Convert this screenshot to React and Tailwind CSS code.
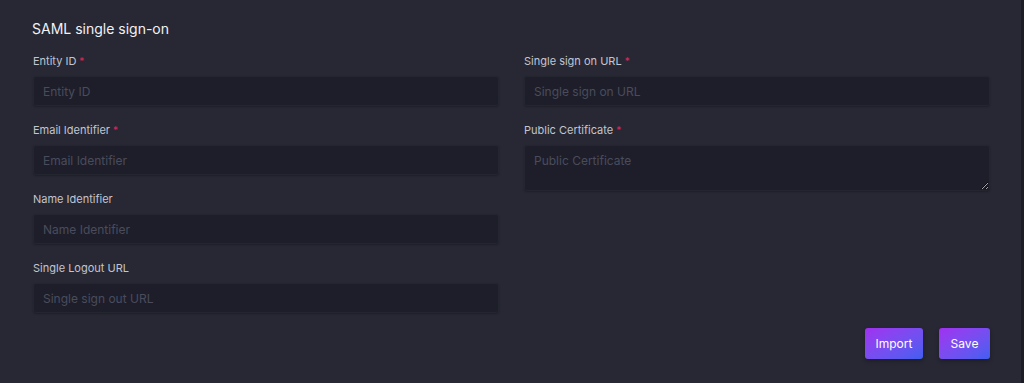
import { useState } from 'react';

const inputClass =
  'w-full h-[30px] px-[9px] bg-[#1d1e2a] border border-[#23252f] rounded-[3px] text-[12px] text-gray-200 placeholder:text-[#4a4c5c] outline-none shadow-[0_1px_2px_rgba(0,0,0,0.25)]';

function Field({ label, required, children }) {
  return (
    <div className="flex flex-col">
      <label className="h-4 mb-[7px] text-[11px] leading-4 text-[#c3c5cf] flex items-center gap-[3px]">
        {label}
        {required && <span className="text-[#e0245e] text-[10px]">*</span>}
      </label>
      {children}
    </div>
  );
}

export default function App() {
  const [form, setForm] = useState({
    entityId: '',
    email: '',
    name: '',
    logout: '',
    sso: '',
    cert: ''
  });

  const update = (key) => (e) => setForm({ ...form, [key]: e.target.value });

  return (
    <div className="w-full h-[383px] flex bg-[#272834] font-['Inter','Liberation_Sans',sans-serif]">
      <div className="flex-1 pt-[19px] pl-[32px] pr-[31px]">
        <h2 className="text-[14px] leading-5 font-normal text-[#f1f1f4] mb-[14px]">SAML single sign-on</h2>

        <div className="grid grid-cols-2 gap-x-[25px] pl-px">
          {/* Left column */}
          <div className="flex flex-col gap-[16px]">
            <Field label="Entity ID" required>
              <input className={inputClass} placeholder="Entity ID" value={form.entityId} onChange={update('entityId')} />
            </Field>
            <Field label="Email Identifier" required>
              <input className={inputClass} placeholder="Email Identifier" value={form.email} onChange={update('email')} />
            </Field>
            <Field label="Name Identifier">
              <input className={inputClass} placeholder="Name Identifier" value={form.name} onChange={update('name')} />
            </Field>
            <Field label="Single Logout URL">
              <input className={inputClass} placeholder="Single sign out URL" value={form.logout} onChange={update('logout')} />
            </Field>
          </div>

          {/* Right column */}
          <div className="flex flex-col gap-[16px]">
            <Field label="Single sign on URL" required>
              <input className={inputClass} placeholder="Single sign on URL" value={form.sso} onChange={update('sso')} />
            </Field>
            <Field label="Public Certificate" required>
              <textarea
                className="w-full h-[46px] px-[9px] pt-[6px] bg-[#1d1e2a] border border-[#23252f] rounded-[3px] text-[12px] text-gray-200 placeholder:text-[#4a4c5c] outline-none shadow-[0_1px_2px_rgba(0,0,0,0.25)] resize-y"
                placeholder="Public Certificate"
                value={form.cert}
                onChange={update('cert')}
              />
            </Field>
          </div>
        </div>

        <div className="flex justify-end gap-[16px] mt-[15px]">
          <button className="w-[58px] h-[31px] rounded-[3px] bg-gradient-to-br from-[#a02ff0] to-[#3f5ef0] text-[12px] text-white shadow-[0_2px_4px_rgba(0,0,0,0.3)]">
            Import
          </button>
          <button className="w-[51px] h-[31px] rounded-[3px] bg-gradient-to-br from-[#a02ff0] to-[#3f5ef0] text-[12px] text-white shadow-[0_2px_4px_rgba(0,0,0,0.3)]">
            Save
          </button>
        </div>
      </div>
      <div className="w-[3px] bg-[#1b1c25]" />
    </div>
  );
}
